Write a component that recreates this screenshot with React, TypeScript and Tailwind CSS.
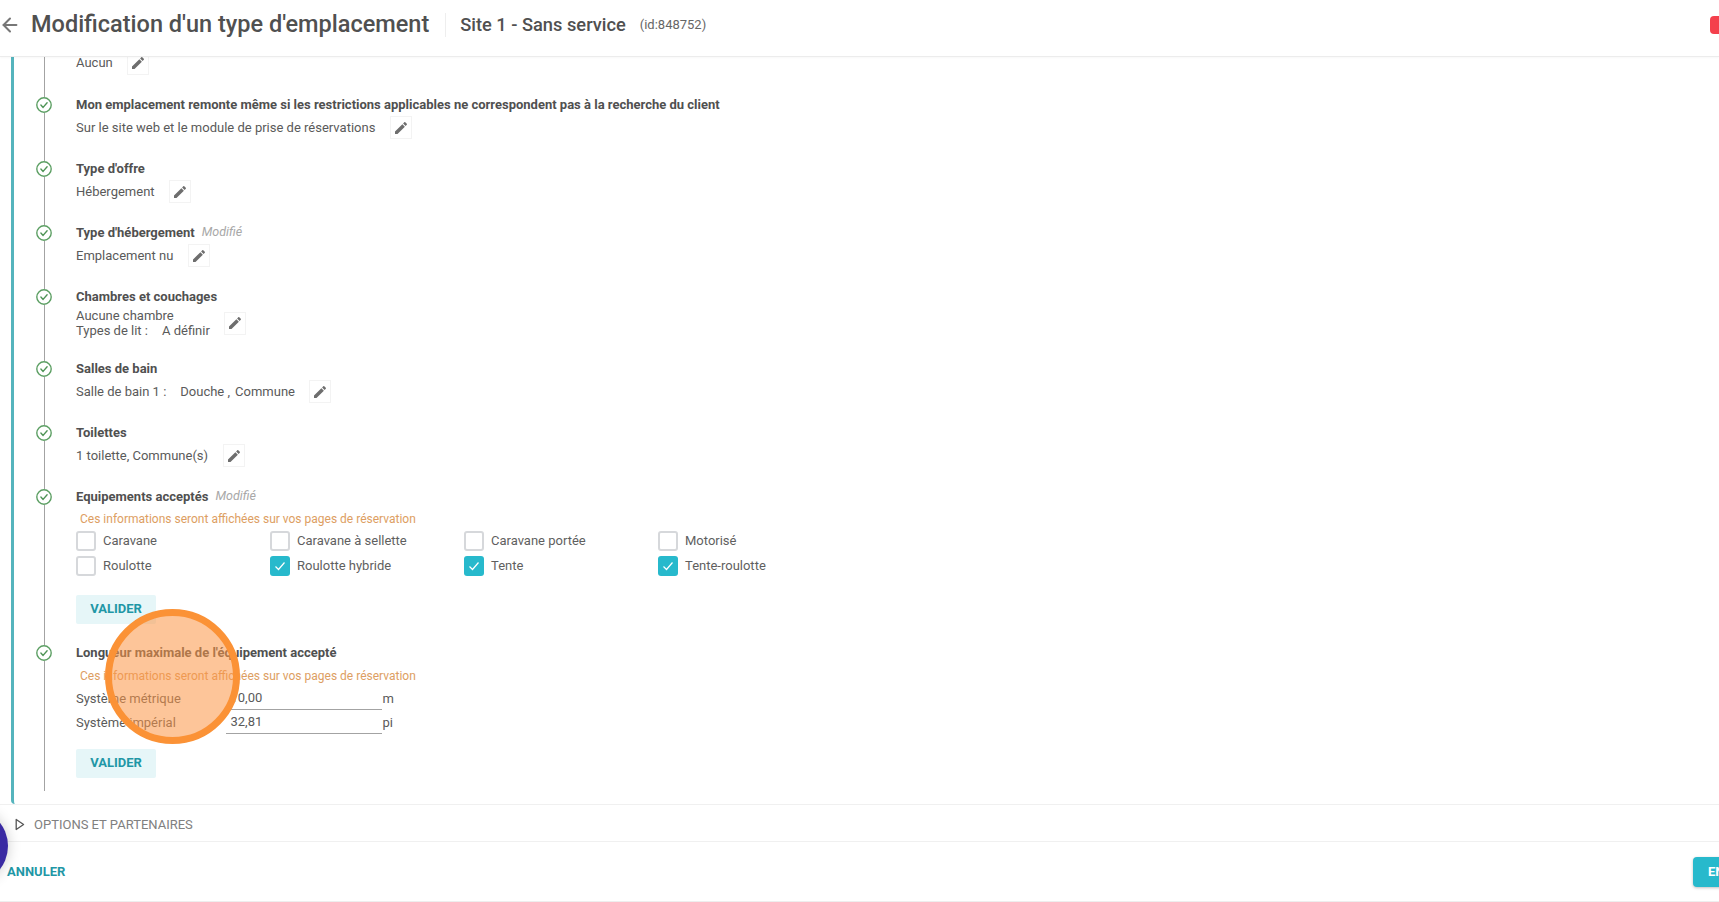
import type { ReactNode } from "react"
import { ArrowLeft } from "lucide-react"

function CheckIcon() {
  return (
    <svg width="16" height="16" viewBox="0 0 16 16" fill="none" className="shrink-0">
      <circle cx="8" cy="8" r="7.2" stroke="#5c9f63" strokeWidth="1.4" fill="#fff" />
      <path d="M4.9 8.1l2.2 2.3 4-4.6" stroke="#4f9457" strokeWidth="1.4" strokeLinecap="round" strokeLinejoin="round" />
    </svg>
  )
}

function EditButton() {
  return (
    <button className="ml-[14.5px] flex h-[23px] w-[22px] shrink-0 items-center justify-center border border-[#f3f3f3] bg-white">
      <svg width="16" height="16" viewBox="0 0 24 24" fill="#6e6e6e">
        <path d="M3 17.25V21h3.75L17.81 9.94l-3.75-3.75L3 17.25zM20.71 7.04c.39-.39.39-1.02 0-1.41l-2.34-2.34c-.39-.39-1.02-.39-1.41 0l-1.83 1.83 3.75 3.75 1.83-1.83z" />
      </svg>
    </button>
  )
}

function Step({
  title,
  modified,
  last,
  children,
}: {
  title: string
  modified?: boolean
  last?: boolean
  children: ReactNode
}) {
  return (
    <div className="flex">
      <div className="mr-[24px] flex w-[16px] shrink-0 flex-col items-center">
        <CheckIcon />
        <div className="w-px flex-1 bg-[#a3a3a3]" />
      </div>
      <div className={last ? "pb-[13px]" : "pb-[21.5px]"}>
        <div className="flex h-[16px] items-center">
          <span className="text-[13px] font-bold text-[#505050]">{title}</span>
          {modified && <span className="ml-[7px] text-[12.5px] text-[#a8a8a8] italic">Modifié</span>}
        </div>
        {children}
      </div>
    </div>
  )
}

function ValueRow({ children }: { children: ReactNode }) {
  return (
    <div className="mt-[3.5px] flex h-[23px] items-center text-[13px] text-[#5a5a5a]">
      {children}
      <EditButton />
    </div>
  )
}

function Info() {
  return <div className="mt-[7.5px] h-[15px] pl-[4px] text-[12px] leading-[15px] text-[#dd9e62]">Ces informations seront affichées sur vos pages de réservation</div>
}

function Box({ label, checked }: { label: string; checked?: boolean }) {
  return (
    <label className="flex h-[20px] items-center text-[13px] text-[#5f5f5f]">
      {checked ? (
        <span className="flex h-[20px] w-[20px] items-center justify-center rounded-[3px] bg-[#27b9cc]">
          <svg width="14" height="14" viewBox="0 0 14 14" fill="none">
            <path d="M2.5 7.5l3 3 6-7" stroke="#fff" strokeWidth="1.2" />
          </svg>
        </span>
      ) : (
        <span className="h-[20px] w-[20px] rounded-[3px] border-2 border-[#d6d8db] bg-white" />
      )}
      <span className="ml-[7px]">{label}</span>
    </label>
  )
}

function Valider() {
  return (
    <button className="flex h-[29px] w-[80px] items-center justify-center rounded-[2px] bg-[#e6f6f8] text-[13px] font-bold text-[#1f97a6]">
      VALIDER
    </button>
  )
}

function Measure({ label, value, unit }: { label: string; value: string; unit: string }) {
  return (
    <div className="flex h-[22px] items-center text-[13px] text-[#5a5a5a]">
      <span className="w-[149.5px]">{label}</span>
      <span className="h-[22px] w-[156px] border-b border-[#a3a3a3] pl-[5px] leading-[20px]">{value}</span>
      <span className="ml-[1px]">{unit}</span>
    </div>
  )
}

const equipements = [
  { label: "Caravane" },
  { label: "Caravane à sellette" },
  { label: "Caravane portée" },
  { label: "Motorisé" },
  { label: "Roulotte" },
  { label: "Roulotte hybride", checked: true },
  { label: "Tente", checked: true },
  { label: "Tente-roulotte", checked: true },
]

export default function App() {
  return (
    <div className="relative flex h-screen w-full flex-col overflow-hidden bg-white font-[Roboto,sans-serif]">
      <header className="z-10 flex h-[57px] shrink-0 items-center border-b border-[#ececec] bg-white pb-[7px] shadow-[0_1px_2px_rgba(0,0,0,0.03)]">
        <ArrowLeft className="-ml-px h-[22px] w-[22px] text-[#777]" strokeWidth={2.2} />
        <h1 className="ml-[10px] text-[23.5px] font-medium whitespace-nowrap text-[#505050]">Modification d'un type d'emplacement</h1>
        <div className="mr-[14px] ml-[16px] h-[24px] w-px bg-[#eeeeee]" />
        <span className="text-[18.25px] font-medium whitespace-nowrap text-[#505050]">Site 1 - Sans service</span>
        <span className="ml-[14px] text-[13px] text-[#666]">(id:848752)</span>
        <div className="-mr-[40px] ml-auto h-[18px] w-[49px] rounded-[4px] bg-[#f4404c]" />
      </header>

      <main className="flex-1 overflow-hidden">
        <section className="ml-[10.5px] h-[747px] overflow-hidden rounded-bl-[4px] border-l-[3px] border-[#55b4bd] pl-[22.5px]">
          <div className="-mt-[9px]">
            <div className="flex">
              <div className="mr-[24px] flex w-[16px] shrink-0 flex-col items-center">
                <div className="w-px flex-1 bg-[#a3a3a3]" />
              </div>
              <div className="pb-[22px]">
                <ValueRow>Aucun</ValueRow>
              </div>
            </div>

            <Step title="Mon emplacement remonte même si les restrictions applicables ne correspondent pas à la recherche du client">
              <ValueRow>Sur le site web et le module de prise de réservations</ValueRow>
            </Step>
            <Step title="Type d'offre">
              <ValueRow>Hébergement</ValueRow>
            </Step>
            <Step title="Type d'hébergement" modified>
              <ValueRow>Emplacement nu</ValueRow>
            </Step>
            <Step title="Chambres et couchages">
              <div className="mt-[3.5px] mb-[1px] flex items-center text-[13px] leading-[15px] text-[#5a5a5a]">
                <div>
                  <div>Aucune chambre</div>
                  <div>Types de lit :<span className="ml-[14px]">A définir</span></div>
                </div>
                <EditButton />
              </div>
            </Step>
            <Step title="Salles de bain">
              <ValueRow>
                Salle de bain 1 :<span className="ml-[14px]">Douche ,</span>
                <span className="ml-[5px]">Commune</span>
              </ValueRow>
            </Step>
            <Step title="Toilettes">
              <ValueRow>1 toilette, Commune(s)</ValueRow>
            </Step>
            <Step title="Equipements acceptés" modified>
              <Info />
              <div className="mt-[3.5px] grid w-[776px] grid-cols-4 gap-y-[5px]">
                {equipements.map((e) => (
                  <Box key={e.label} label={e.label} checked={e.checked} />
                ))}
              </div>
              <div className="mt-[19px]">
                <Valider />
              </div>
            </Step>
            <Step title="Longueur maximale de l'équipement accepté" last>
              <Info />
              <div className="mt-[4px] flex flex-col gap-[2px]">
                <Measure label="Système métrique" value="10,00" unit="m" />
                <Measure label="Système impérial" value="32,81" unit="pi" />
              </div>
              <div className="mt-[15px]">
                <Valider />
              </div>
            </Step>
          </div>
        </section>

        <div className="flex h-[38px] items-center border-y border-[#f0f0f0] pt-[3px] pl-[15px]">
          <svg width="10" height="13" viewBox="0 0 10 13" fill="none">
            <path d="M1.2 1.5L8.6 6.5l-7.4 5z" stroke="#555" strokeWidth="1.3" strokeLinejoin="round" />
          </svg>
          <span className="ml-[9px] text-[13px] text-[#808080]">OPTIONS ET PARTENAIRES</span>
        </div>

        <footer className="flex h-[60px] items-center border-b border-[#eeeeee] pl-[7px]">
          <span className="text-[13px] font-bold text-[#1f97a6]">ANNULER</span>
          <button className="-mr-[90px] ml-auto h-[30px] w-[116px] rounded-[4px] bg-[#27b9cc] pl-[15px] text-left text-[13px] font-bold text-white shadow-[0_1px_3px_rgba(0,0,0,0.25)]">
            ENREGISTRER
          </button>
        </footer>
      </main>

      <div className="absolute top-[609px] left-[105px] h-[135px] w-[135px] rounded-full border-[7px] border-[#fb9236] bg-[#fc9646]/55" />
      <div className="absolute top-[808px] -left-[68px] h-[76px] w-[76px] rounded-full bg-[#3a2aa3] shadow-[0_0_14px_rgba(0,0,0,0.2)]" />
    </div>
  )
}
